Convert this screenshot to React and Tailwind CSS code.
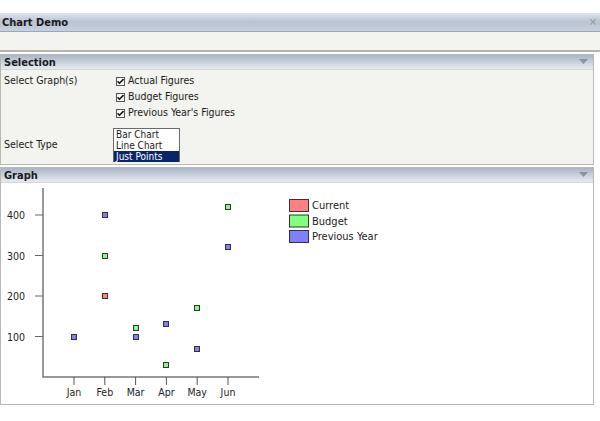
// App.jsx
// Chart Demo window — selection panel (checkboxes + list) and a scatter graph.

const months = ['Jan', 'Feb', 'Mar', 'Apr', 'May', 'Jun']

// values per month, null = no point
const series = [
  { name: 'Current',       fill: '#ff8080', values: [null, 200, null, null, null, null] },
  { name: 'Budget',        fill: '#80ff80', values: [null, 300, 120, 30, 170, 420] },
  { name: 'Previous Year', fill: '#8080ff', values: [100, 400, 100, 130, 70, 320] },
]

const X0 = 42
const Y0 = 377
const monthX = (i) => 73 + i * 30.8
const valY = (v) => Y0 - v * 0.405

function PanelHeader({ title }) {
  return (
    <div className="h-[15px] flex items-center justify-between px-[3px] bg-gradient-to-b from-[#aab4c6] via-[#c9d0dc] to-[#e8ebf0] border-b border-[#d4d8de]">
      <span className="font-bold text-[11px] text-[#1a1a1a] leading-none">{title}</span>
      <svg width="9" height="6" viewBox="0 0 9 6" className="mr-[2px]">
        <path d="M0 0h9L4.5 5z" fill="#8a93a3" />
      </svg>
    </div>
  )
}

function Check({ label }) {
  return (
    <div className="h-[16px] flex items-center gap-[3px]">
      <span className="w-[9px] h-[9px] border border-[#555] bg-white flex items-center justify-center">
        <svg width="7" height="7" viewBox="0 0 7 7">
          <path d="M0.5 3.2l2 2 4-4.2" stroke="#111" strokeWidth="1.6" fill="none" />
        </svg>
      </span>
      <span>{label}</span>
    </div>
  )
}

function Chart() {
  return (
    <svg width="400" height="221" viewBox="0 183 400 221" className="block">
      {/* axes */}
      <path d={`M${X0} 188V${Y0}H258`} stroke="#777" strokeWidth="1.5" fill="none" />
      {[100, 200, 300, 400].map((v) => (
        <g key={v}>
          <line x1="34" x2={X0} y1={valY(v)} y2={valY(v)} stroke="#666" />
          <text x="6" y={valY(v) + 4} fontSize="10.5" fill="#222">{v}</text>
        </g>
      ))}
      {months.map((m, i) => (
        <g key={m}>
          <line x1={monthX(i)} x2={monthX(i)} y1={Y0} y2={Y0 + 8} stroke="#555" />
          <text x={monthX(i)} y={Y0 + 19} fontSize="10.5" fill="#222" textAnchor="middle">{m}</text>
        </g>
      ))}
      {series.map((s) =>
        s.values.map((v, i) =>
          v == null ? null : (
            <rect
              key={s.name + i}
              x={Math.round(monthX(i)) - 2.5}
              y={Math.round(valY(v)) - 2.5}
              width="5"
              height="5"
              fill={s.fill}
              stroke="#333"
              strokeWidth="1"
            />
          )
        )
      )}
      {/* legend */}
      {series.map((s, i) => (
        <g key={s.name}>
          <rect x="288.5" y={199.5 + i * 15.5} width="19" height="12" fill={s.fill} stroke="#333" />
          <text x="311" y={209 + i * 15.5} fontSize="11" fill="#222">{s.name}</text>
        </g>
      ))}
    </svg>
  )
}

export default function App() {
  return (
    <div
      className="w-[600px] h-[421px] bg-white text-[10.5px] text-[#1a1a1a] overflow-hidden"
      style={{ fontFamily: 'Tahoma, "DejaVu Sans Condensed", "Liberation Sans", sans-serif' }}
    >
      <div className="h-[13px]" />

      {/* window title bar */}
      <div className="h-[19px] flex items-center justify-between pl-[2px] pr-[3px] bg-gradient-to-b from-[#dfe4ec] via-[#b9c3d3] to-[#c8d0dc] border-b border-[#9aa6ba]">
        <span className="font-bold text-[11px] leading-none">Chart Demo</span>
        <svg width="8" height="8" viewBox="0 0 8 8">
          <rect x="0.5" y="0.5" width="7" height="7" fill="none" stroke="#c4c8d0" />
          <path d="M1.5 1.5l5 5M6.5 1.5l-5 5" stroke="#9aa0aa" strokeWidth="1.2" />
        </svg>
      </div>

      {/* empty toolbar strip */}
      <div className="h-[20px] bg-[#f3f3ef] border-b-2 border-[#b4b4b0]" />

      <div className="h-[2px]" />

      {/* Selection panel */}
      <div className="w-[594px] border border-[#b8b8b4] bg-[#f3f3ef]">
        <PanelHeader title="Selection" />
        <div className="h-[94px] flex flex-col pt-[3px]">
          <div className="flex">
            <div className="w-[112px] pl-[3px] h-[16px] flex items-center">Select Graph(s)</div>
            <div className="pl-[3px]">
              <Check label="Actual Figures" />
              <Check label="Budget Figures" />
              <Check label="Previous Year's Figures" />
            </div>
          </div>
          <div className="flex items-center mt-[7px]">
            <div className="w-[112px] pl-[3px]">Select Type</div>
            <div className="w-[67px] h-[34px] border border-[#6a6a6a] bg-white text-[10px] leading-[11px]">
              <div className="pl-[2px]">Bar Chart</div>
              <div className="pl-[2px]">Line Chart</div>
              <div className="pl-[2px] bg-[#0a246a] text-white">Just Points</div>
            </div>
          </div>
        </div>
      </div>

      <div className="h-[2px]" />

      {/* Graph panel */}
      <div className="w-[594px] border border-[#b8b8b4] bg-white">
        <PanelHeader title="Graph" />
        <Chart />
      </div>
    </div>
  )
}
